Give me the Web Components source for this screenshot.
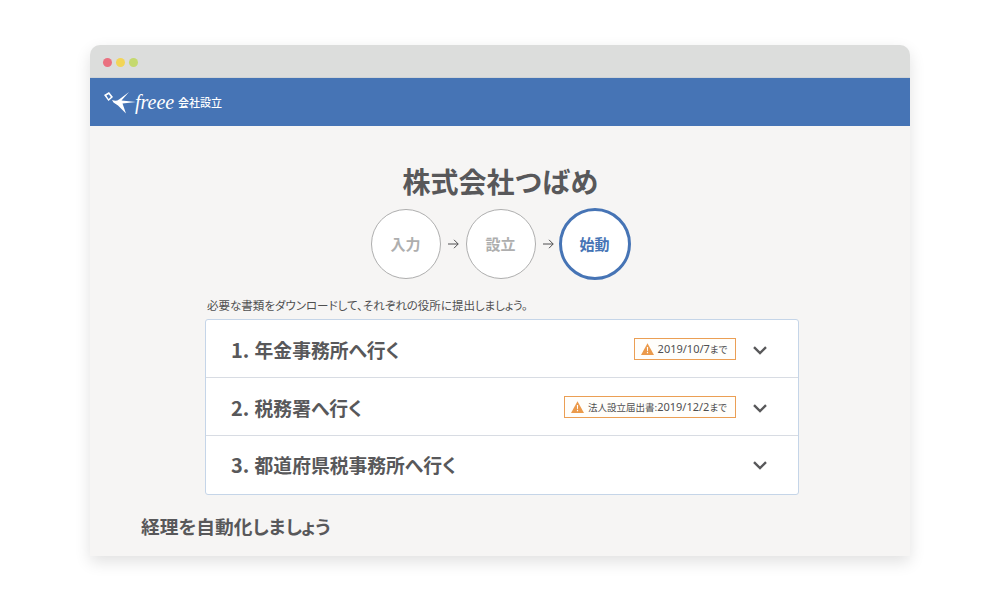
<!DOCTYPE html>
<html lang="ja">
<head>
<meta charset="utf-8">
<title>freee 会社設立</title>
<style>
  html, body { margin: 0; height: 100%; background: #fff; }
  body { font-family: "Noto Sans CJK JP", "Noto Sans", sans-serif; overflow: hidden; }
</style>
</head>
<body>
<browser-frame>
  <app-header slot="header"></app-header>
  <company-title>株式会社つばめ</company-title>
  <step-flow></step-flow>
  <task-lead>必要な書類をダウンロードして、それぞれの役所に提出しましょう。</task-lead>
  <task-list>
    <task-row num="1." label="年金事務所へ行く" badge="2019/10/7" width="102"></task-row>
    <task-row num="2." label="税務署へ行く" badge="2019/12/2" prefix="法人設立届出書:" width="172"></task-row>
    <task-row num="3." label="都道府県税事務所へ行く"></task-row>
  </task-list>
  <section-head>経理を自動化しましょう</section-head>
</browser-frame>

<script>
(() => {
  const FONT = '"Noto Sans CJK JP", "Noto Sans", sans-serif';
  const COLOR__TEXT = '#58585a';
  const COLOR__BLUE = '#4674b5';

  class BrowserFrame extends HTMLElement {
    constructor() {
      super();
      this.attachShadow({ mode: 'open' });
      this.shadowRoot.innerHTML = `
        <style>
          :host {
            display: block;
            width: 820px;
            height: 511px;
            margin: 45px 0 0 90px;
            border-radius: 10px 10px 0 0;
            background: #f6f5f4;
            box-shadow: 0 6px 16px rgba(0, 0, 0, 0.12);
            overflow: hidden;
            font-family: ${FONT};
            color: ${COLOR__TEXT};
          }
          .chrome {
            height: 33px;
            background: #dcdddc;
            display: flex;
            align-items: center;
            gap: 4px;
            padding: 3px 0 0 12.5px;
            box-sizing: border-box;
            border-bottom: 1px solid #cfd3d6;
          }
          .dot { width: 9px; height: 9px; border-radius: 50%; }
          .body { display: flex; flex-direction: column; }
        </style>
        <div class="chrome">
          <span class="dot" style="background:#ea7180"></span>
          <span class="dot" style="background:#f2d558"></span>
          <span class="dot" style="background:#c5d96f"></span>
        </div>
        <slot name="header"></slot>
        <div class="body"><slot></slot></div>
      `;
    }
  }

  class AppHeader extends HTMLElement {
    constructor() {
      super();
      this.attachShadow({ mode: 'open' });
      this.shadowRoot.innerHTML = `
        <style>
          :host {
            display: flex;
            align-items: center;
            height: 48px;
            padding-left: 13px;
            background: ${COLOR__BLUE};
            color: #fff;
          }
          svg { display: block; flex: none; overflow: visible; }
          .word {
            font: italic 400 20px/1 "Liberation Serif", serif;
            width: 43px;
          }
          .name {
            font: 500 11px/1 ${FONT};
            margin-top: 1px;
          }
        </style>
        <svg width="32" height="26" viewBox="0 0 32 26" fill="#fff">
          <path d="M1 6 L6 3 L10 8 L5.5 12 Z M3.4 6.6 L5.6 10 L7.8 8 L5.8 5.2 Z" fill-rule="evenodd"/>
          <path d="M9 11 C12 12 14 12 16 10.5 L26 3 L18.5 11.5 L33 13 L19.5 14.6 L23 24.5 L15 16.5 L10.5 13.5 Z"/>
        </svg>
        <span class="word">freee</span>
        <span class="name">会社設立</span>
      `;
    }
  }

  class CompanyTitle extends HTMLElement {
    constructor() {
      super();
      this.attachShadow({ mode: 'open' });
      this.shadowRoot.innerHTML = `
        <style>
          :host {
            display: block;
            margin-top: 36px;
            padding-left: 1px;
            text-align: center;
            font-size: 28px;
            line-height: 38px;
            font-weight: 700;
          }
        </style>
        <slot></slot>
      `;
    }
  }

  class StepFlow extends HTMLElement {
    constructor() {
      super();
      this.attachShadow({ mode: 'open' });
      const arrow = `
        <svg width="11" height="10" viewBox="0 0 11 10" fill="none" stroke="#4f4f50" stroke-width="1">
          <path d="M0 5 H10.2 M6 0.8 L10.2 5 L6 9.2"/>
        </svg>`;
      this.shadowRoot.innerHTML = `
        <style>
          :host {
            display: flex;
            justify-content: center;
            align-items: center;
            gap: 7px;
            margin-top: 8px;
            padding-left: 2px;
          }
          .step {
            width: 70px;
            height: 70px;
            box-sizing: border-box;
            border: 1.5px solid #aeaeae;
            border-radius: 50%;
            background: #fff;
            color: #aeaeae;
            display: flex;
            align-items: center;
            justify-content: center;
            font-size: 15px;
            font-weight: 700;
            padding: 0 1px 2px 0;
          }
          .step.active {
            width: 72px;
            height: 72px;
            border: 3.5px solid ${COLOR__BLUE};
            color: ${COLOR__BLUE};
            margin-left: -2px;
          }
        </style>
        <div class="step">入力</div>${arrow}
        <div class="step">設立</div>${arrow}
        <div class="step active">始動</div>
      `;
    }
  }

  class TaskLead extends HTMLElement {
    constructor() {
      super();
      this.attachShadow({ mode: 'open' });
      this.shadowRoot.innerHTML = `
        <style>
          :host {
            display: block;
            margin: 15px 0 4px 117px;
            font-size: 11.5px;
            line-height: 20px;
            height: 20px;
            color: #4f4f50;
            font-feature-settings: "palt";
          }
        </style>
        <slot></slot>
      `;
    }
  }

  class TaskList extends HTMLElement {
    constructor() {
      super();
      this.attachShadow({ mode: 'open' });
      this.shadowRoot.innerHTML = `
        <style>
          :host {
            display: block;
            width: 594px;
            box-sizing: border-box;
            margin: 0 0 0 115px;
            background: #fff;
            border: 1px solid #c5d5e8;
            border-radius: 3px;
          }
          ::slotted(task-row:not(:last-child)) { border-bottom: 1px solid #d8dce3; }
        </style>
        <slot></slot>
      `;
    }
  }

  class TaskRow extends HTMLElement {
    constructor() {
      super();
      this.attachShadow({ mode: 'open' });
    }

    connectedCallback() {
      const num = this.getAttribute('num');
      const label = this.getAttribute('label');
      const date = this.getAttribute('badge');
      const prefix = this.getAttribute('prefix') || '';
      const width = this.getAttribute('width');

      const badge = date ? `
        <span class="badge" style="width:${width}px">
          <svg width="13" height="12" viewBox="0 0 13 12">
            <path d="M6.5 0.3 L13 12 H0 Z" fill="#eb9a4b"/>
            <path d="M5.9 4 H7.1 L6.9 8.2 H6.1 Z M5.9 9 H7.1 V10.2 H5.9 Z" fill="#fff"/>
          </svg>
          <span class="txt">${prefix ? `<small>${prefix}</small>` : ''}${date}<small>まで</small></span>
        </span>` : '';

      this.shadowRoot.innerHTML = `
        <style>
          :host {
            display: flex;
            align-items: center;
            height: 58px;
            padding: 2px 31px 0 25px;
            box-sizing: border-box;
          }
          :host(:last-child) { padding-top: 0; }
          .title {
            flex: 1;
            font-size: 18.8px;
            font-weight: 700;
            line-height: 1;
            white-space: nowrap;
            font-feature-settings: "palt";
          }
          .num { font-size: 20px; margin-right: 1px; }
          .badge {
            display: flex;
            align-items: center;
            justify-content: center;
            gap: 4px;
            height: 22px;
            box-sizing: border-box;
            border: 1px solid #eb9f55;
            background: #fffefb;
            margin: -2px 17px 0 0;
            padding-right: 2px;
          }
          .txt {
            font: 400 11px/1 "Noto Sans", ${FONT};
            color: #4f4f50;
            white-space: nowrap;
            font-feature-settings: "palt";
          }
          small { font-size: 9.5px; font-family: ${FONT}; }
          .chev { display: block; flex: none; margin-top: 1px; }
        </style>
        <span class="title"><span class="num">${num}</span> ${label}</span>
        ${badge}
        <svg class="chev" width="14" height="9" viewBox="0 0 14 9" fill="none" stroke="#58585a" stroke-width="2.4">
          <path d="M1 1.2 L7 7 L13 1.2"/>
        </svg>
      `;
    }
  }

  class SectionHead extends HTMLElement {
    constructor() {
      super();
      this.attachShadow({ mode: 'open' });
      this.shadowRoot.innerHTML = `
        <style>
          :host {
            display: block;
            margin: 18px 0 0 51px;
            font-size: 18.7px;
            line-height: 26px;
            font-weight: 700;
            font-feature-settings: "palt";
          }
        </style>
        <slot></slot>
      `;
    }
  }

  const ELEMENTS = {
    'browser-frame': BrowserFrame,
    'app-header': AppHeader,
    'company-title': CompanyTitle,
    'step-flow': StepFlow,
    'task-lead': TaskLead,
    'task-list': TaskList,
    'task-row': TaskRow,
    'section-head': SectionHead,
  };
  Object.keys(ELEMENTS).forEach((name) => {
    window.customElements.define(name, ELEMENTS[name]);
  });
})();
</script>
</body>
</html>
